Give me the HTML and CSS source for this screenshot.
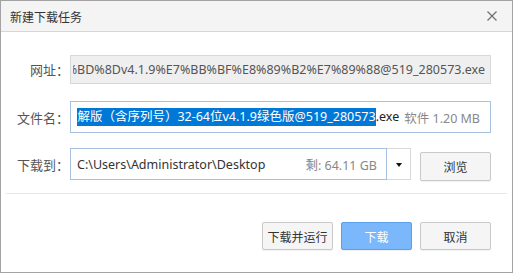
FILE: index.html
```html
<!DOCTYPE html>
<html lang="zh-CN">
<head>
<meta charset="utf-8">
<title>新建下载任务</title>
<link rel="stylesheet" href="styles.css">
</head>
<body>
<div class="window">
  <div class="titlebar">
    <span class="title">新建下载任务</span>
    <span class="close">
      <svg width="10" height="10" viewBox="0 0 10 10"><path d="M0.5 0.5L9.5 9.5M9.5 0.5L0.5 9.5" stroke="#6f6f6f" stroke-width="1.2" fill="none"/></svg>
    </span>
  </div>
  <div class="form">
    <div class="row row-url">
      <span class="label">网址：</span>
      <div class="field field-url">
        <div class="clip"><span class="text">http://dl.pc6.com/soft/%E7%A0%B4%E8%A7%A3%E7%89%88%EF%BC%88%E5%90%AB%E5%BA%8F%E5%88%97%E5%8F%B7%EF%BC%8932-64%E4%BD%8Dv4.1.9%E7%BB%BF%E8%89%B2%E7%89%88@519_280573.exe</span></div>
      </div>
    </div>
    <div class="row row-name">
      <span class="label">文件名：</span>
      <div class="field field-name">
        <div class="clip"><span class="text"><span class="sel">软件破解版（含序列号）32-64位v4.1.9绿色版@519_280573</span>.exe</span></div>
        <span class="meta">软件 1.20 MB</span>
      </div>
    </div>
    <div class="row row-dir">
      <span class="label">下载到：</span>
      <div class="field field-dir">
        <span class="path">C:\Users\Administrator\Desktop</span>
        <span class="meta">剩: 64.11 GB</span>
      </div>
      <div class="dropdown"><span class="caret"></span></div>
      <button class="btn btn-browse">浏览</button>
    </div>
  </div>
  <div class="sep"></div>
  <div class="actions">
    <button class="btn">下载并运行</button>
    <button class="btn btn-primary">下载</button>
    <button class="btn">取消</button>
  </div>
</div>
</body>
</html>
```
FILE: styles.css
```css
html, body {
  margin: 0;
  padding: 0;
  background: #ffffff;
}
body {
  font-family: "Noto Sans", "Noto Sans CJK SC", sans-serif;
}
.window {
  width: 513px;
  height: 273px;
  box-sizing: border-box;
  border: 1px solid #a3a3a3;
  background: #ffffff;
}
.titlebar {
  height: 30px;
  border-bottom: 1px solid #d6d6d6;
  background: #f4f4f4;
  display: flex;
  align-items: center;
  justify-content: space-between;
  padding: 0 15px 0 9px;
}
.title {
  font-size: 12px;
  color: #333333;
  font-family: "Noto Sans CJK SC", sans-serif;
}
.close {
  display: flex;
  width: 10px;
  height: 10px;
}
.form {
  display: flex;
  flex-direction: column;
}
.row {
  display: flex;
  align-items: center;
}
.row-url { margin-top: 23px; height: 29px; }
.row-name { margin-top: 17px; height: 32px; }
.row-dir { margin-top: 15px; height: 32px; }
.label {
  width: 68px;
  margin-right: 1px;
  text-align: right;
  font-size: 13px;
  color: #555555;
  font-family: "Noto Sans CJK TC", sans-serif;
  white-space: nowrap;
}
.field {
  box-sizing: border-box;
  height: 100%;
  display: flex;
  align-items: center;
  font-size: 12.5px;
  white-space: nowrap;
}
.clip {
  flex: 1;
  min-width: 0;
  overflow: hidden;
  display: flex;
  justify-content: flex-end;
}
.text {
  flex-shrink: 0;
  white-space: nowrap;
}
.field-url {
  width: 421px;
  border: 1px solid #d8d8d8;
  background: #efefef;
  color: #555555;
  padding: 0 5px 0 2px;
}
.field-name {
  width: 421px;
  border: 1px solid #a8c1e0;
  background: #ffffff;
  color: #222222;
  padding: 0 10px 0 6px;
}
.sel {
  background: #0078d7;
  color: #ffffff;
  display: inline-block;
  line-height: 18px;
}
.field .meta {
  color: #888888;
  margin-left: 5px;
  flex-shrink: 0;
}
.field-dir {
  width: 317px;
  border: 1px solid #a8c1e0;
  color: #333333;
  padding: 0 9px 0 6px;
  justify-content: space-between;
}
.dropdown {
  box-sizing: border-box;
  width: 24px;
  height: 100%;
  border: 1px solid #d8d8d8;
  border-left: none;
  display: flex;
  align-items: center;
  justify-content: center;
}
.caret {
  width: 0;
  height: 0;
  border-left: 3.5px solid transparent;
  border-right: 3.5px solid transparent;
  border-top: 4px solid #111111;
  margin-top: 1px;
}
.btn {
  box-sizing: border-box;
  width: 71px;
  height: 28px;
  border: 1px solid #c9c9c9;
  border-radius: 2px;
  background: #f5f5f5;
  color: #333333;
  font-family: "Noto Sans CJK SC", sans-serif;
  font-size: 12px;
  padding: 0;
  box-shadow: 0 1px 1px rgba(0,0,0,0.06);
}
.btn-browse {
  margin-left: 9px;
  height: 29px;
  align-self: flex-start;
  margin-top: 4px;
}
.btn-primary {
  background: #7ab7fb;
  border-color: #5c9fe8;
  color: #ffffff;
}
.sep {
  margin: 13px 5px 0 5px;
  height: 1px;
  background: #e8e8e8;
}
.actions {
  margin-top: 28px;
  display: flex;
  justify-content: flex-end;
  gap: 8px;
  padding-right: 21px;
}
```
